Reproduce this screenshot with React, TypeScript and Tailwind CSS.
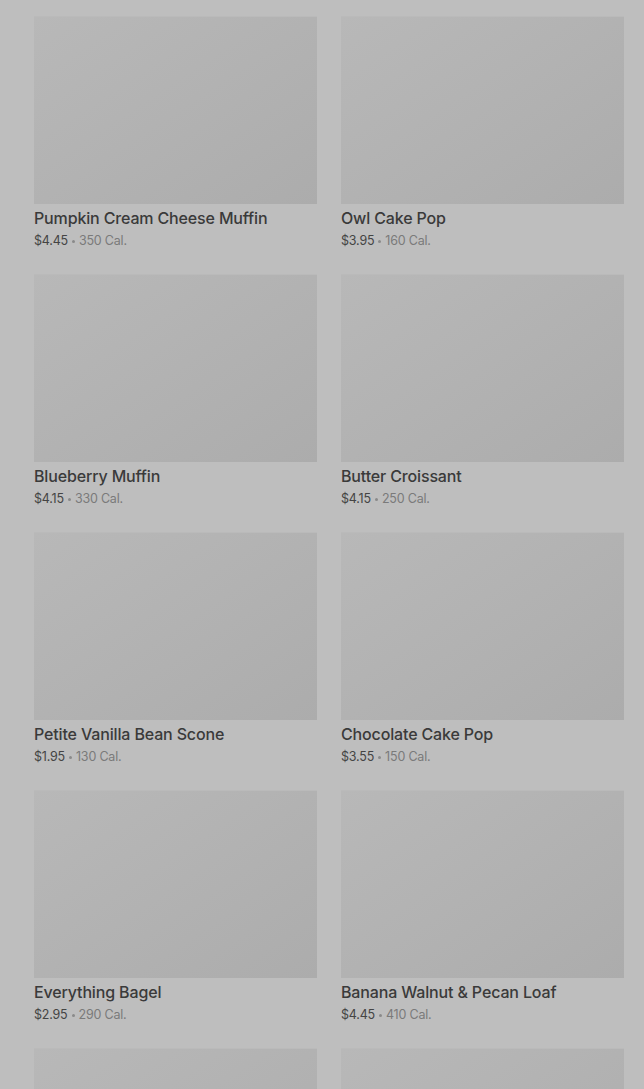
import React from "react";

const items = [
  { name: "Pumpkin Cream Cheese Muffin", price: "$4.45", cal: "350 Cal." },
  { name: "Owl Cake Pop", price: "$3.95", cal: "160 Cal." },
  { name: "Blueberry Muffin", price: "$4.15", cal: "330 Cal." },
  { name: "Butter Croissant", price: "$4.15", cal: "250 Cal." },
  { name: "Petite Vanilla Bean Scone", price: "$1.95", cal: "130 Cal." },
  { name: "Chocolate Cake Pop", price: "$3.55", cal: "150 Cal." },
  { name: "Everything Bagel", price: "$2.95", cal: "290 Cal." },
  { name: "Banana Walnut & Pecan Loaf", price: "$4.45", cal: "410 Cal." },
  { name: "", price: "", cal: "" },
  { name: "", price: "", cal: "" },
];

export default function App() {
  return (
    <div
      className="w-[644px] h-[1089px] overflow-hidden bg-[#bebebe]"
      style={{ fontFamily: "Inter, 'Noto Sans', sans-serif" }}
    >
      <div className="grid grid-cols-2 gap-x-[24px] gap-y-[25px] pl-[34px] pr-[20px] pt-[16px]">
        {items.map((it, i) => (
          <div key={i} className="flex flex-col">
            <div className="h-[188px] bg-gradient-to-br from-[#b8b8b8] to-[#acacac] border-t border-[#bababa]" />
            {it.name && (
              <>
                <div className="mt-[3px] h-[22px] text-[16px] leading-[22px] font-medium text-[#3a3a3a] tracking-[-0.15px] whitespace-nowrap">
                  {it.name}
                </div>
                <div className="mt-[4px] h-[16px] flex items-center text-[12.5px] leading-[16px] text-[#7a7a7a] tracking-[-0.2px] whitespace-nowrap">
                  <span className="text-[#444444]">{it.price}</span>
                  <span className="mx-[4px] w-[3px] h-[3px] rounded-full bg-[#8a8a8a]" />
                  <span>{it.cal}</span>
                </div>
              </>
            )}
          </div>
        ))}
      </div>
    </div>
  );
}
